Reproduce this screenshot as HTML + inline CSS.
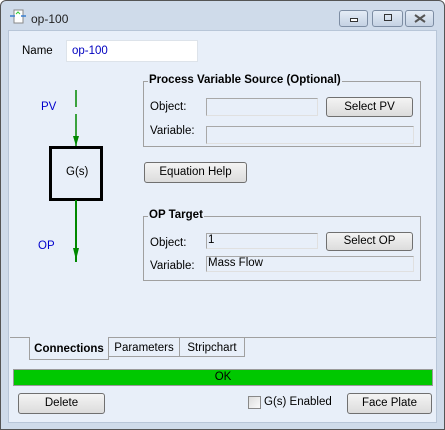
<!DOCTYPE html>
<html><head><style>
*{margin:0;padding:0;box-sizing:border-box}
body{width:445px;height:430px;overflow:hidden;background:#fff;font-family:"Liberation Sans",sans-serif;font-size:11px;color:#000}
.a{position:absolute}
#win{left:0;top:0;width:445px;height:430px;background:#cfdbea;border:1px solid #555;border-radius:6px 6px 0 0}
#content{left:8px;top:30px;width:429px;height:393px;background:#e8eff9;border:1px solid #b8c6d8}
.tb{top:10px;height:17px;border:1px solid #7d8da3;border-radius:3px;background:linear-gradient(#e4ecf6,#c5d2e3)}
.inp{background:#e8eff9;border:1px solid #a8a8a8;border-right-color:#e0e0e0;border-bottom-color:#e0e0e0}
.btn{border:1px solid #707070;border-radius:3px;background:linear-gradient(#f4f4f4,#dcdcdc);text-align:center;font-size:11.5px}
.grp{border:1px solid #a0a0a0}
.lg{background:#e8eff9;font-weight:bold;font-size:11.5px;padding:0 1px}
.lbl{font-size:11.5px}
</style></head><body>
<div id="win" class="a"></div>
<svg class="a" style="left:9px;top:8px" width="18" height="18"><rect x="5" y="2" width="9" height="13" fill="#fff" stroke="#888"/><path d="M1 8h5M12 8h5" stroke="#3a7fd0" stroke-width="1.5"/><path d="M7 6l2-2 2 2" stroke="#3c3" fill="none"/></svg>
<div class="a" style="left:31px;top:12px;font-size:12px;color:#222">op-100</div>
<div class="a tb" style="left:339px;width:29px"><div class="a" style="left:10px;top:7px;width:8px;height:4px;border:1px solid #333;background:#fff"></div></div>
<div class="a tb" style="left:372px;width:31px"><div class="a" style="left:11px;top:3px;width:8px;height:7px;border:1px solid #333"></div></div>
<div class="a tb" style="left:405px;width:29px"><svg class="a" style="left:8px;top:3px" width="12" height="9"><path d="M1 1l10 7M11 1L1 8" stroke="#555" stroke-width="2"/></svg></div>
<div id="content" class="a"></div>
<div class="a lbl" style="left:22px;top:45px">Name</div>
<div class="a" style="left:66px;top:40px;width:132px;height:22px;background:#fff;border:1px solid #dde3ea"><span class="a" style="left:5px;top:4px;color:#0000c0;font-size:11.5px">op-100</span></div>
<svg class="a" style="left:30px;top:80px" width="90" height="190">
<path d="M46 10v17M46 34v16" stroke="#080" stroke-width="1.5"/>
<path d="M43 56l3 10 3-10z" fill="#080"/><path d="M46 50v16" stroke="#080" stroke-width="1.5"/>
<rect x="20.5" y="67.5" width="51" height="52" fill="none" stroke="#000" stroke-width="3"/>
<path d="M46 120v62" stroke="#080" stroke-width="2"/><path d="M43 168l3 12 3-12z" fill="#080"/>
</svg>
<div class="a" style="left:41px;top:101px;color:#00c;font-size:11.5px">PV</div>
<div class="a" style="left:66px;top:166px;font-size:11.5px">G(s)</div>
<div class="a" style="left:38px;top:240px;color:#00c;font-size:11.5px">OP</div>
<div class="a grp" style="left:143px;top:81px;width:278px;height:66px"></div>
<div class="a lg" style="left:148px;top:74px">Process Variable Source (Optional)</div>
<div class="a lbl" style="left:150px;top:101px">Object:</div>
<div class="a inp" style="left:206px;top:98px;width:112px;height:18px"></div>
<div class="a btn" style="left:326px;top:97px;width:87px;height:20px;line-height:18px">Select PV</div>
<div class="a lbl" style="left:150px;top:125px">Variable:</div>
<div class="a inp" style="left:206px;top:126px;width:208px;height:18px"></div>
<div class="a btn" style="left:144px;top:162px;width:103px;height:21px;line-height:19px">Equation Help</div>
<div class="a grp" style="left:143px;top:216px;width:278px;height:65px"></div>
<div class="a lg" style="left:148px;top:209px">OP Target</div>
<div class="a lbl" style="left:150px;top:237px">Object:</div>
<div class="a inp" style="left:206px;top:233px;width:112px;height:16px"><span class="a" style="left:1px;top:0;font-size:11.5px">1</span></div>
<div class="a btn" style="left:326px;top:232px;width:87px;height:19px;line-height:17px">Select OP</div>
<div class="a lbl" style="left:150px;top:260px">Variable:</div>
<div class="a inp" style="left:206px;top:256px;width:208px;height:16px"><span class="a" style="left:1px;top:0;font-size:11.5px">Mass Flow</span></div>
<div class="a" style="left:10px;top:337px;width:426px;height:1px;background:#a0a0a0"></div>
<div class="a" style="left:108px;top:337px;width:72px;height:20px;border:1px solid #a0a0a0;border-top:none;text-align:center;line-height:22px;font-size:11.5px">Parameters</div>
<div class="a" style="left:180px;top:337px;width:65px;height:20px;border:1px solid #a0a0a0;border-top:none;border-left:none;text-align:center;line-height:22px;font-size:11.5px">Stripchart</div>
<div class="a" style="left:29px;top:337px;width:80px;height:23px;border:1px solid #a0a0a0;border-top:none;background:#e8eff9;text-align:center;line-height:24px;font-size:11.5px;font-weight:bold">Connections</div>
<div class="a" style="left:13px;top:369px;width:420px;height:17px;background:#00c800;border:1px solid #9a9a9a;text-align:center;line-height:15px;font-size:11.5px">OK</div>
<div class="a btn" style="left:18px;top:393px;width:87px;height:21px;line-height:19px">Delete</div>
<div class="a" style="left:248px;top:396px;width:13px;height:13px;border:1px solid #888;background:linear-gradient(135deg,#ddd,#fafafa)"></div>
<div class="a lbl" style="left:264px;top:396px">G(s) Enabled</div>
<div class="a btn" style="left:347px;top:393px;width:85px;height:21px;line-height:19px">Face Plate</div>
</body></html>
